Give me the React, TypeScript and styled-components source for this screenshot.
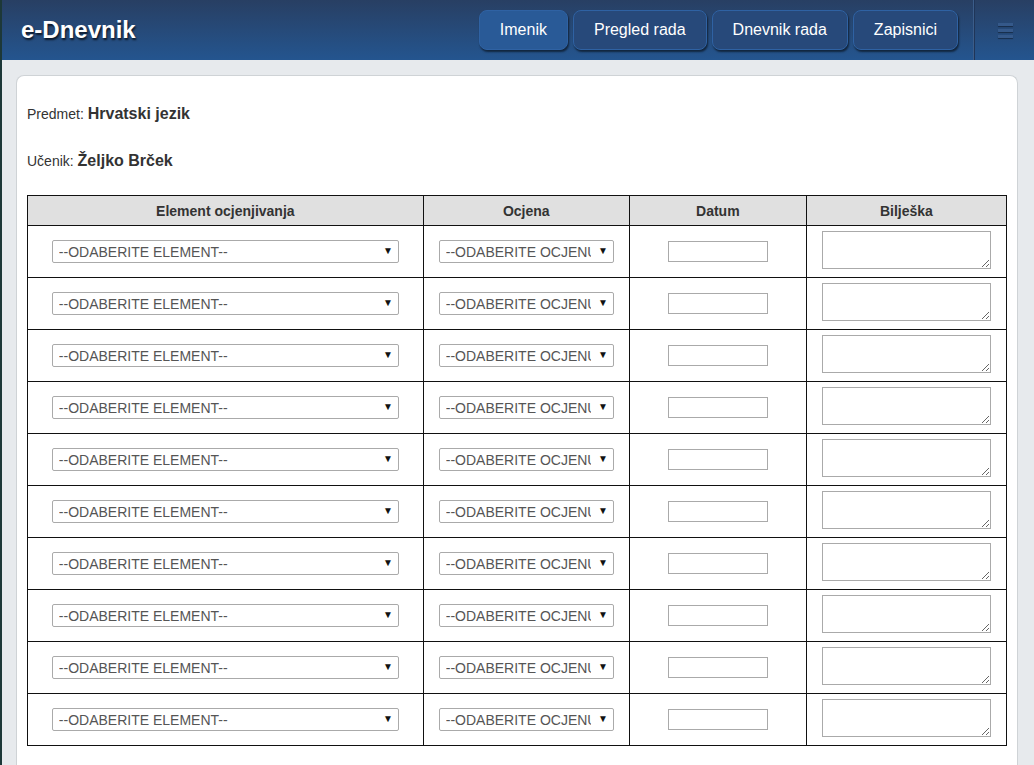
import styled, { createGlobalStyle } from "styled-components";

const GlobalStyle = createGlobalStyle`
  html, body {
    margin: 0;
    padding: 0;
    background: #e7eaed;
    font-family: "Liberation Sans", Arial, sans-serif;
  }
  #root {
    min-height: 765px;
    border-left: 2px solid #1d3838;
    box-sizing: border-box;
  }
`;

const Header = styled.header`
  height: 60px;
  display: flex;
  align-items: center;
  background: linear-gradient(to bottom, #283f63 0%, #24558f 100%);
`;

const Title = styled.h1`
  margin: 0 0 0 19px;
  flex: 1;
  font-size: 24px;
  font-weight: bold;
  color: #fff;
  text-shadow: 1px 2px 2px rgba(0, 0, 0, 0.7);
`;

const Nav = styled.nav`
  display: flex;
  gap: 5px;
  margin-right: 15px;
`;

const NavButton = styled.a<{ $active?: boolean }>`
  display: flex;
  align-items: center;
  height: 38px;
  padding: 0 20px;
  font-size: 16px;
  color: #fff;
  text-decoration: none;
  border: 1px solid #2f62a3;
  border-radius: 8px;
  background: ${(p) => (p.$active ? "#295a97" : "#27497a")};
  box-shadow: 1px 2px 2px rgba(0, 0, 0, 0.55);
`;

const MenuArea = styled.div`
  align-self: stretch;
  width: 60px;
  border-left: 1px solid #3b5d8a;
  box-shadow: inset 1px 0 0 #1f3558;
  display: flex;
  align-items: center;
  justify-content: center;
`;

const Bars = styled.div`
  display: flex;
  flex-direction: column;
  gap: 3px;
  margin-left: 3px;

  span {
    display: block;
    width: 15px;
    height: 3px;
    background: #35598a;
    box-shadow: 0 1px 1px rgba(0, 0, 0, 0.4);
  }
`;

const Main = styled.main`
  padding: 15px 16px 0 14px;
`;

const Card = styled.section`
  background: #fff;
  border: 1px solid #cfd3d6;
  border-bottom: none;
  border-radius: 8px 8px 0 0;
  padding: 28px 10px 20px 10px;
  min-height: 660px;
`;

const InfoLine = styled.p<{ $last?: boolean }>`
  margin: 0 0 ${(p) => (p.$last ? "24px" : "27px")} 0;
  font-size: 14px;
  color: #333;
  line-height: 20px;

  b {
    font-size: 16px;
    color: #333;
  }
`;

const Table = styled.table`
  width: 100%;
  border-collapse: collapse;

  th,
  td {
    border: 1px solid #111;
    text-align: center;
    vertical-align: middle;
    padding: 0;
  }
`;

const HeadCell = styled.th<{ $w: number }>`
  width: ${(p) => p.$w}px;
  height: 29px;
  background: #e0e0e0;
  font-size: 14px;
  font-weight: bold;
  color: #333;
`;

const Row = styled.tr`
  height: 52px;
`;

const SelectWrap = styled.div<{ $w: number }>`
  position: relative;
  width: ${(p) => p.$w}px;
  margin: 0 auto;
`;

const Select = styled.select`
  appearance: none;
  display: block;
  width: 100%;
  height: 23px;
  padding: 0 22px 0 6px;
  border: 1px solid #aaa;
  border-radius: 2px;
  background: #fff;
  font-family: "Liberation Sans", Arial, sans-serif;
  font-size: 14px;
  color: #555;
`;

const Arrow = styled.span`
  position: absolute;
  right: 6px;
  top: 5px;
  font-size: 10px;
  color: #111;
  pointer-events: none;
`;

const DateInput = styled.input`
  display: block;
  margin: 0 auto;
  width: 100px;
  height: 21px;
  padding: 0 4px;
  box-sizing: border-box;
  border: 1px solid #aaa;
`;

const Note = styled.textarea`
  display: block;
  margin: -3px auto 0;
  width: 169px;
  height: 38px;
  box-sizing: border-box;
  border: 1px solid #aaa;
  font-family: "Liberation Sans", Arial, sans-serif;
`;

const rows = Array.from({ length: 10 }, (_, i) => i);

export default function App() {
  return (
    <>
      <GlobalStyle />
      <Header>
        <Title>e-Dnevnik</Title>
        <Nav>
          <NavButton $active>Imenik</NavButton>
          <NavButton>Pregled rada</NavButton>
          <NavButton>Dnevnik rada</NavButton>
          <NavButton>Zapisnici</NavButton>
        </Nav>
        <MenuArea>
          <Bars>
            <span />
            <span />
            <span />
          </Bars>
        </MenuArea>
      </Header>
      <Main>
        <Card>
          <InfoLine>
            Predmet: <b>Hrvatski jezik</b>
          </InfoLine>
          <InfoLine $last>
            Učenik: <b>Željko Brček</b>
          </InfoLine>
          <Table>
            <thead>
              <tr>
                <HeadCell $w={396}>Element ocjenjivanja</HeadCell>
                <HeadCell $w={206}>Ocjena</HeadCell>
                <HeadCell $w={178}>Datum</HeadCell>
                <HeadCell $w={200}>Bilješka</HeadCell>
              </tr>
            </thead>
            <tbody>
              {rows.map((i) => (
                <Row key={i}>
                  <td>
                    <SelectWrap $w={347}>
                      <Select defaultValue="">
                        <option value="">--ODABERITE ELEMENT--</option>
                      </Select>
                      <Arrow>▼</Arrow>
                    </SelectWrap>
                  </td>
                  <td>
                    <SelectWrap $w={175}>
                      <Select defaultValue="">
                        <option value="">--ODABERITE OCJENU--</option>
                      </Select>
                      <Arrow>▼</Arrow>
                    </SelectWrap>
                  </td>
                  <td>
                    <DateInput type="text" />
                  </td>
                  <td>
                    <Note />
                  </td>
                </Row>
              ))}
            </tbody>
          </Table>
        </Card>
      </Main>
    </>
  );
}
